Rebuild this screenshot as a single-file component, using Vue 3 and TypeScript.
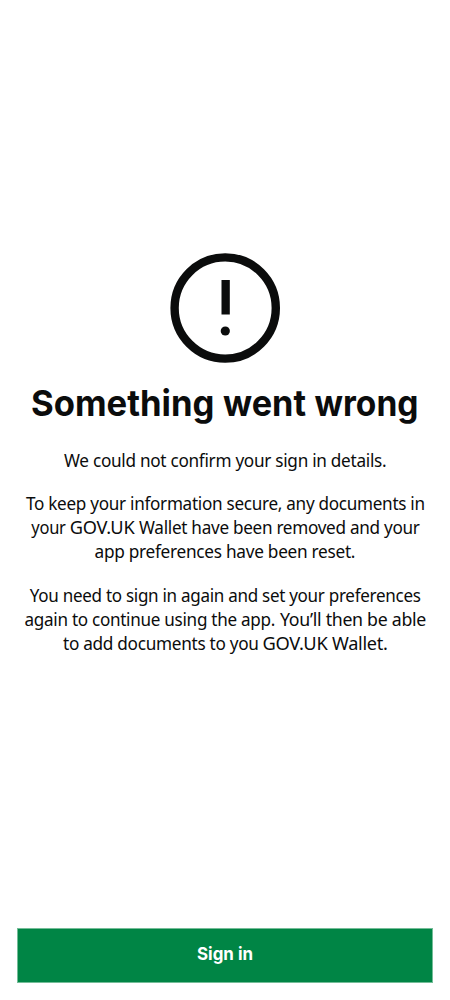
<script setup lang="ts">
interface Run { text: string; x: number; width: number }
const heading: Run[] = [
  { text: 'Something', x: 31, width: 183.5 },
  { text: 'went', x: 223, width: 83 },
  { text: 'wrong', x: 314.5, width: 104 },
]
const paragraphs: Run[][][] = [
  [[{ text: 'We could not confirm your sign in details.', x: 64, width: 322.3 }]],
  [
    [{ text: 'To keep your information secure, any documents in', x: 26, width: 398.8 }],
    [
      { text: 'your', x: 31.3, width: 34.3 },
      { text: 'GOV.UK', x: 69.7, width: 64.7 },
      { text: 'Wallet have been removed and your', x: 139, width: 280.6 },
    ],
    [{ text: 'app preferences have been reset.', x: 94.5, width: 260.7 }],
  ],
  [
    [{ text: 'You need to sign in again and set your preferences', x: 29.8, width: 390.8 }],
    [
      { text: 'again to continue using the app.', x: 24.5, width: 250.5 },
      { text: 'You’ll then be able', x: 280, width: 146 },
    ],
    [
      { text: 'to add documents to you', x: 63, width: 195.7 },
      { text: 'GOV.UK', x: 262.5, width: 65 },
      { text: 'Wallet.', x: 332, width: 55.5 },
    ],
  ],
]
</script>

<template>
  <div class="screen">
    <main class="content">
      <svg class="icon" viewBox="0 0 110 110" aria-hidden="true">
        <circle cx="55.2" cy="55" r="50.6" fill="none" stroke="#0b0c0c" stroke-width="8.4" />
        <rect x="51.5" y="27" width="8.3" height="34.5" fill="#0b0c0c" />
        <circle cx="55.3" cy="78" r="4.6" fill="#0b0c0c" />
      </svg>
      <svg class="heading" width="450" height="56" role="heading" aria-level="1">
        <text v-for="run in heading" :key="run.text" :x="run.x" y="39" :textLength="run.width" lengthAdjust="spacingAndGlyphs">{{ run.text }}</text>
      </svg>
      <div v-for="(lines, i) in paragraphs" :key="i" class="paragraph">
        <svg v-for="(line, j) in lines" :key="j" class="line" width="450" height="24">
          <text v-for="run in line" :key="run.text" :x="run.x" y="18" :textLength="run.width" lengthAdjust="spacingAndGlyphs">{{ run.text }}</text>
        </svg>
      </div>
    </main>
    <button class="action" type="button">
      <svg width="70" height="30"><text x="35" y="21" text-anchor="middle" textLength="56" lengthAdjust="spacingAndGlyphs">Sign in</text></svg>
    </button>
  </div>
</template>

<style>
body { background: #fff; }
</style>
<style scoped>
.screen { box-sizing: border-box; display: flex; flex-direction: column; width: 450px; height: 1000px; padding-bottom: 17px; font-family: "Noto Sans", sans-serif; color: #0b0c0c; }
.content { flex: 1; display: flex; flex-direction: column; align-items: center; padding-top: 253px; }
.icon { width: 110px; height: 110px; }
.heading { display: block; margin-top: 14px; margin-bottom: -4px; font-family: Inter, sans-serif; font-size: 36px; font-weight: 700; }
.heading, .line { overflow: visible; }
.heading text, .line text { fill: #0b0c0c; }
.paragraph { display: flex; flex-direction: column; margin-top: 19.5px; font-size: 18px; letter-spacing: -0.3px; }
.line { display: block; }
.action { box-sizing: border-box; display: flex; align-items: center; justify-content: center; height: 55px; margin: 0 17px; border: 1px solid #74bd98; padding: 0; background: #008545; }
.action svg { display: block; margin-bottom: 3px; font-family: Inter, sans-serif; font-size: 18px; font-weight: 700; }
.action text { fill: #fff; }
</style>
